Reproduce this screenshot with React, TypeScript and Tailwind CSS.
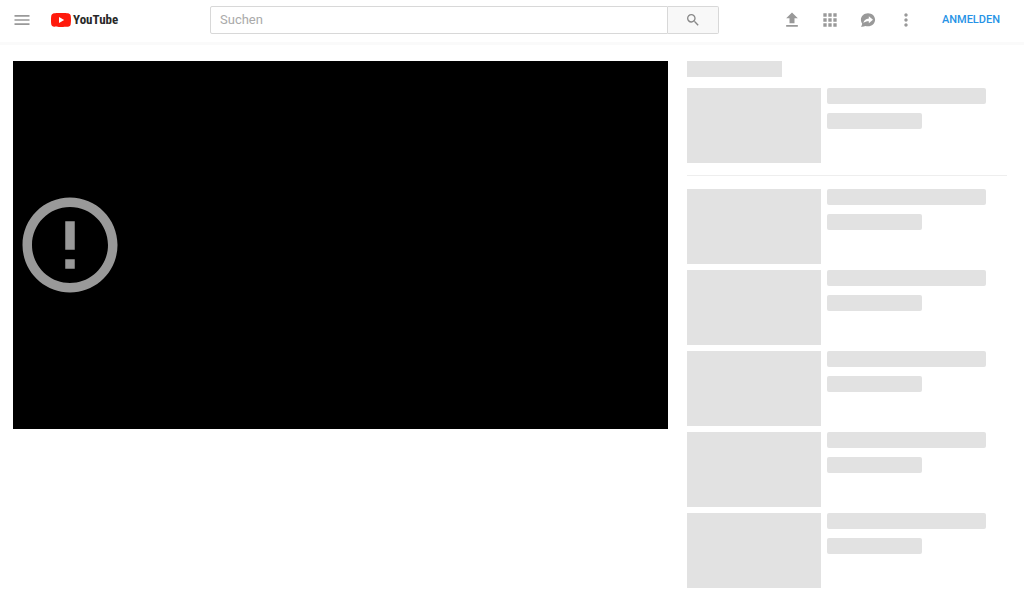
import type { ReactNode } from "react";

function Icon({ d, className }: { d: string; className: string }) {
  return (
    <svg viewBox="0 0 24 24" fill="currentColor" aria-hidden="true" className={className}>
      <path d={d} />
    </svg>
  );
}

function IconButton({ label, children }: { label: string; children: ReactNode }) {
  return (
    <button type="button" aria-label={label} className="flex h-8 w-[38px] items-center justify-center text-[#999]">
      {children}
    </button>
  );
}

function Logo() {
  return (
    <a href="/" aria-label="YouTube" className="flex items-center gap-0.5">
      <svg viewBox="0 0 20 14" aria-hidden="true" className="h-[14px] w-5">
        <path
          fill="#ff1a0c"
          d="M19.6 2.2A2.5 2.5 0 0 0 17.8.4C16.300 0 10 0 10 0S3.700 0 2.200.4A2.500 2.500 0 0 0 .4 2.200C0 3.800 0 7 0 7s0 3.200.4 4.800a2.500 2.500 0 0 0 1.800 1.800C3.700 14 10 14 10 14s6.300 0 7.800-.4a2.500 2.500 0 0 0 1.800-1.800C20 10.200 20 7 20 7s0-3.200-.4-4.800z"
        />
        <path fill="#fff" d="M8 10l5.200-3L8 4z" />
      </svg>
      <span className="font-['Liberation_Sans_Narrow','Roboto_Condensed',Roboto,sans-serif] text-[13px] leading-4 font-bold text-[#282828]">
        YouTube
      </span>
    </a>
  );
}

function Header() {
  return (
    <header className="flex h-[45px] items-center border-b-3 border-[#fafafa] bg-white pr-6 pb-[2px]">
      <div className="flex w-[210px] shrink-0 items-center gap-[19px] pl-3">
        <button type="button" aria-label="Menü" className="flex h-8 w-5 items-center justify-center text-[#999]">
          <Icon className="size-5" d="M3 18h18v-2H3v2zm0-5h18v-2H3v2zm0-7v2h18V6H3z" />
        </button>
        <Logo />
      </div>
      <form role="search" className="flex h-7 max-w-[509px] flex-1">
        <input
          type="text"
          aria-label="Suchen"
          placeholder="Suchen"
          className="min-w-0 flex-1 rounded-l-xs border border-[#d8d8d8] px-[9px] text-[13px] outline-none placeholder:text-[#aaa]"
        />
        <button
          type="submit"
          aria-label="Suche starten"
          className="flex w-[51px] items-center justify-center rounded-r-xs border border-l-0 border-[#d8d8d8] bg-[#f8f8f8] text-[#888]"
        >
          <Icon
            className="size-4"
            d="M15.500 14h-.79l-.28-.27A6.471 6.471 0 0 0 16 9.500 6.500 6.500 0 1 0 9.500 16c1.610 0 3.090-.59 4.230-1.570l.27.28v.79l5 4.990L20.490 19l-4.990-5zm-6 0C7.010 14 5 11.990 5 9.500S7.010 5 9.500 5 14 7.010 14 9.500 11.990 14 9.500 14z"
          />
        </button>
      </form>
      <nav className="ml-auto flex items-center">
        <IconButton label="Hochladen">
          <Icon className="size-5" d="M9 16h6v-6h4l-7-7-7 7h4zm-4 2h14v2H5z" />
        </IconButton>
        <IconButton label="Apps">
          <Icon
            className="size-5"
            d="M4 8h4V4H4v4zm6 12h4v-4h-4v4zm-6 0h4v-4H4v4zm0-6h4v-4H4v4zm6 0h4v-4h-4v4zm6-10v4h4V4h-4zm-6 4h4V4h-4v4zm6 6h4v-4h-4v4zm0 6h4v-4h-4v4z"
          />
        </IconButton>
        <IconButton label="Nachrichten">
          <svg viewBox="0 0 24 24" aria-hidden="true" className="size-5">
            <path
              fill="currentColor"
              d="M12 3.900c-4.700 0-8.500 3.500-8.500 7.800 0 1.700.6 3.300 1.500 4.500.1 1.200-.7 2.700-1.500 3.900 2 .2 4-.1 5.400-.9 1 .3 2 .4 3.100.4 4.700 0 8.500-3.500 8.500-7.900S16.700 3.900 12 3.900z"
            />
            <path fill="#fff" d="M13 7.600l5 4.100-5 4.100v-2.400c-3 0-5 .6-6.500 2.200.5-3.200 2.500-5.100 6.500-5.500z" />
          </svg>
        </IconButton>
        <IconButton label="Einstellungen">
          <Icon
            className="size-5"
            d="M12 8c1.100 0 2-.9 2-2s-.9-2-2-2-2 .9-2 2 .9 2 2 2zm0 2c-1.100 0-2 .9-2 2s.9 2 2 2 2-.9 2-2-.9-2-2-2zm0 6c-1.100 0-2 .9-2 2s.9 2 2 2 2-.9 2-2-.9-2-2-2z"
          />
        </IconButton>
        <a href="/login" className="ml-[17px] text-[11px] leading-4 font-medium text-[#2793e6]">
          ANMELDEN
        </a>
      </nav>
    </header>
  );
}

function VideoSkeleton() {
  return (
    <li className="flex gap-[6px]">
      <div className="h-[75px] w-[134px] shrink-0 bg-[#e2e2e2]" />
      <div className="flex flex-1 flex-col gap-[9px]">
        <div className="h-4 w-[159px] rounded-xs bg-[#e2e2e2]" />
        <div className="h-4 w-[95px] rounded-xs bg-[#e2e2e2]" />
      </div>
    </li>
  );
}

export default function App() {
  return (
    <div className="min-h-screen bg-white font-[Roboto,sans-serif]">
      <Header />
      <main className="flex items-start gap-[19px] pt-4 pr-[17px] pl-[13px]">
        <section aria-label="Videoplayer" className="flex aspect-video min-w-0 flex-1 items-center bg-black">
          <Icon
            className="size-[114px] text-[#999]"
            d="M11 15h2v2h-2zm0-8h2v6h-2zm.99-5C6.470 2 2 6.480 2 12s4.470 10 9.990 10C17.520 22 22 17.520 22 12S17.520 2 11.990 2zM12 20c-4.420 0-8-3.580-8-8s3.580-8 8-8 8 3.580 8 8-3.580 8-8 8z"
          />
        </section>
        <aside aria-label="Nächste Videos" className="w-[320px] shrink-0">
          <div className="mb-[11px] h-4 w-[95px] bg-[#e2e2e2]" />
          <ul className="border-b border-[#eee] pb-3">
            <VideoSkeleton />
          </ul>
          <ul className="flex flex-col gap-[6px] pt-[13px]">
            {Array.from({ length: 5 }, (_, i) => (
              <VideoSkeleton key={i} />
            ))}
          </ul>
        </aside>
      </main>
    </div>
  );
}
